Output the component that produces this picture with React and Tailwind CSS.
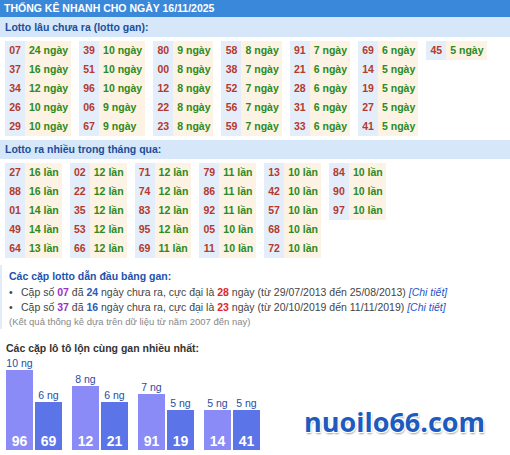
import React from "react";

const gan = [
  [["07", "24 ngày"], ["37", "16 ngày"], ["34", "12 ngày"], ["26", "10 ngày"], ["29", "10 ngày"]],
  [["39", "10 ngày"], ["51", "10 ngày"], ["96", "10 ngày"], ["06", "9 ngày"], ["67", "9 ngày"]],
  [["80", "9 ngày"], ["00", "8 ngày"], ["12", "8 ngày"], ["22", "8 ngày"], ["23", "8 ngày"]],
  [["58", "8 ngày"], ["38", "7 ngày"], ["52", "7 ngày"], ["56", "7 ngày"], ["59", "7 ngày"]],
  [["91", "7 ngày"], ["21", "6 ngày"], ["28", "6 ngày"], ["31", "6 ngày"], ["33", "6 ngày"]],
  [["69", "6 ngày"], ["14", "5 ngày"], ["19", "5 ngày"], ["27", "5 ngày"], ["41", "5 ngày"]],
  [["45", "5 ngày"]],
];

const nhieu = [
  [["27", "16 lần"], ["88", "16 lần"], ["01", "14 lần"], ["49", "14 lần"], ["64", "13 lần"]],
  [["02", "12 lần"], ["22", "12 lần"], ["35", "12 lần"], ["53", "12 lần"], ["66", "12 lần"]],
  [["71", "12 lần"], ["74", "12 lần"], ["83", "12 lần"], ["95", "12 lần"], ["69", "11 lần"]],
  [["79", "11 lần"], ["86", "11 lần"], ["92", "11 lần"], ["05", "10 lần"], ["11", "10 lần"]],
  [["13", "10 lần"], ["42", "10 lần"], ["57", "10 lần"], ["68", "10 lần"], ["72", "10 lần"]],
  [["84", "10 lần"], ["90", "10 lần"], ["97", "10 lần"]],
];

const pairs = [
  [["96", 10], ["69", 6]],
  [["12", 8], ["21", 6]],
  [["91", 7], ["19", 5]],
  [["14", 5], ["41", 5]],
];

function Group({ rows }) {
  return (
    <div className="flex text-[10.5px] font-bold">
      <div className="flex flex-col bg-[#e4eefa]">
        {rows.map(([n]) => (
          <div key={n} className="h-[19px] w-5 text-center leading-[19px] text-[#b5392c]">
            {n}
          </div>
        ))}
      </div>
      <div className="flex flex-col bg-[#fdf3e4]">
        {rows.map(([n, v]) => (
          <div key={n} className="h-[19px] whitespace-nowrap pl-1 pr-[3px] leading-[19px] text-[#2b8a22]">
            {v}
          </div>
        ))}
      </div>
    </div>
  );
}

function Bar({ num, val, dark }) {
  return (
    <div className="flex flex-col items-center">
      <div className="mb-px text-[10.5px] leading-3 text-[#2a4ca4]">{val} ng</div>
      <div
        className={`flex w-[27px] items-end justify-center pb-px text-[14px] font-bold leading-4 text-white ${
          dark ? "bg-[#5b74e8]" : "bg-[#8b8bf7]"
        }`}
        style={{ height: val * 8 }}
      >
        {num}
      </div>
    </div>
  );
}

export default function App() {
  return (
    <div className="h-[455px] w-[510px] overflow-hidden bg-white font-['Liberation_Sans',Arial,sans-serif]">
      <div className="h-[17px] bg-[#3a88d9] pl-1 text-[10.5px] font-bold leading-[17px] text-white">
        THỐNG KÊ NHANH CHO NGÀY 16/11/2025
      </div>
      <div className="h-5 bg-[#d6e7f9] pl-[5px] text-[10.5px] font-bold leading-5 text-[#1b4e9c]">
        Lotto lâu chưa ra (lotto gan):
      </div>
      <div className="flex items-start gap-2 px-[5px] pt-1">
        {gan.map((g, i) => (
          <Group key={i} rows={g} />
        ))}
      </div>
      <div className="mt-1 h-[19px] bg-[#d6e7f9] pl-[5px] text-[10.5px] font-bold leading-[19px] text-[#1b4e9c]">
        Lotto ra nhiều trong tháng qua:
      </div>
      <div className="flex items-start gap-2 px-[5px] pt-1">
        {nhieu.map((g, i) => (
          <Group key={i} rows={g} />
        ))}
      </div>
      <div className="mt-[7px] border-l-2 border-[#e2ecf8] pl-[7px] pt-1">
        <div className="text-[10.5px] font-bold leading-[15px] text-[#1d52ac]">
          Các cặp lotto dẫn đầu bảng gan:
        </div>
        <ul className="mt-px text-[10.5px] leading-[15px] text-[#444]">
          <li className="flex">
            <span className="w-3">•</span>
            <span>
              Cặp số <b className="text-[#9a2fc8]">07</b> đã <b className="text-[#2a5cb8]">24</b> ngày chưa ra,
              cực đại là <b className="text-[#e0262c]">28</b> ngày (từ 29/07/2013 đến 25/08/2013){" "}
              <i className="text-[#2255cc]">[Chi tiết]</i>
            </span>
          </li>
          <li className="flex">
            <span className="w-3">•</span>
            <span>
              Cặp số <b className="text-[#9a2fc8]">37</b> đã <b className="text-[#2a5cb8]">16</b> ngày chưa ra,
              cực đại là <b className="text-[#e0262c]">23</b> ngày (từ 20/10/2019 đến 11/11/2019){" "}
              <i className="text-[#2255cc]">[Chi tiết]</i>
            </span>
          </li>
        </ul>
        <div className="text-[9.5px] leading-[14px] text-[#888]">
          (Kết quả thống kê dựa trên dữ liệu từ năm 2007 đến nay)
        </div>
      </div>
      <div className="mt-3 pl-[6px]">
        <div className="text-[10.5px] font-bold leading-[14px] text-[#333]">
          Các cặp lô tô lộn cùng gan nhiều nhất:
        </div>
        <div className="flex items-end">
          <div className="flex h-[95px] items-end gap-[10px]">
            {pairs.map((p, i) => (
              <div key={i} className="flex items-end gap-[2px]">
                <Bar num={p[0][0]} val={p[0][1]} />
                <Bar num={p[1][0]} val={p[1][1]} dark />
              </div>
            ))}
          </div>
          <div
            className="mb-[12px] ml-[44px] font-['Open_Sans',sans-serif] text-[27px] font-bold leading-8 text-[#1e5bbf]"
            style={{ textShadow: "1px 1px 0 #fff, -1px -1px 0 #fff, 1px -1px 0 #fff, -1px 1px 0 #fff, 1px 2px 2px #999" }}
          >
            nuoilo66.com
          </div>
        </div>
      </div>
    </div>
  );
}
